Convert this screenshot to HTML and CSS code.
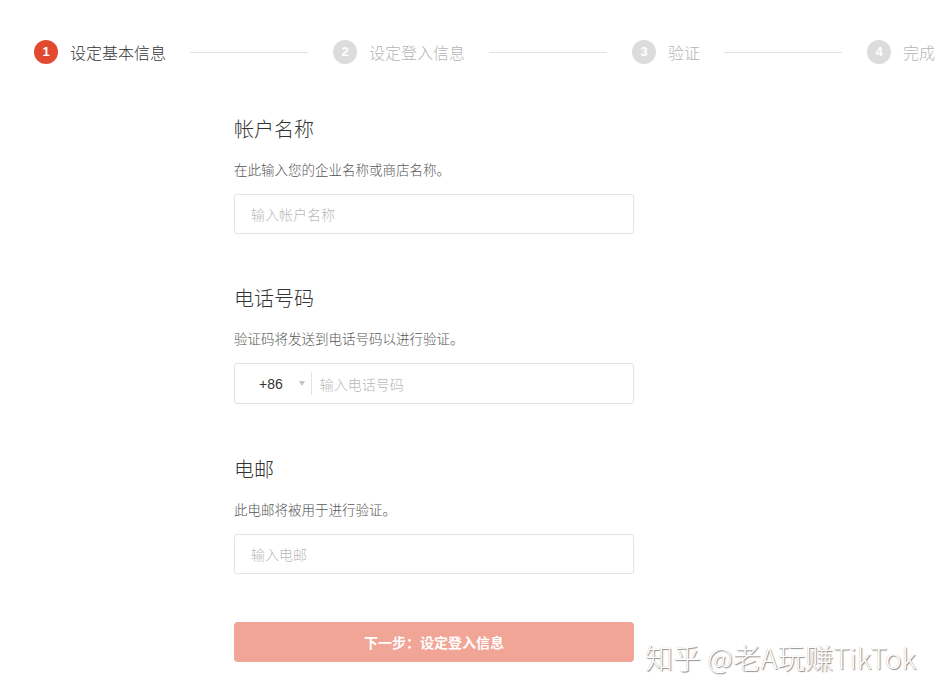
FILE: index.html
```html
<!DOCTYPE html>
<html lang="zh">
<head>
<meta charset="utf-8">
<link rel="stylesheet" href="styles.css">
</head>
<body>
<div class="page">
  <div class="steps">
    <span class="num active">1</span><span class="label active">设定基本信息</span><span class="line"></span>
    <span class="num">2</span><span class="label">设定登入信息</span><span class="line"></span>
    <span class="num">3</span><span class="label">验证</span><span class="line"></span>
    <span class="num">4</span><span class="label">完成</span>
  </div>

  <div class="form">
    <div class="section">
      <div class="title">帐户名称</div>
      <div class="desc">在此输入您的企业名称或商店名称。</div>
      <div class="input"><span class="ph">输入帐户名称</span></div>
    </div>
    <div class="section">
      <div class="title">电话号码</div>
      <div class="desc">验证码将发送到电话号码以进行验证。</div>
      <div class="input phone">
        <span class="code">+86</span>
        <span class="caret"></span>
        <span class="sep"></span>
        <span class="ph">输入电话号码</span>
      </div>
    </div>
    <div class="section">
      <div class="title">电邮</div>
      <div class="desc">此电邮将被用于进行验证。</div>
      <div class="input"><span class="ph">输入电邮</span></div>
    </div>
    <div class="btn">下一步：设定登入信息</div>
  </div>
  <div class="watermark">知乎 @老A玩赚TikTok</div>
</div>
</body>
</html>
```

FILE: styles.css
```css
* { box-sizing: border-box; }
html, body { margin: 0; padding: 0; background: #fff; }
body {
  font-family: "Noto Sans CJK SC", "Noto Sans", sans-serif;
  color: #333;
  width: 945px;
  height: 696px;
  overflow: hidden;
}
.page { position: relative; width: 945px; height: 696px; }

.steps {
  display: flex;
  align-items: center;
  padding: 40px 0 0 34px;
  height: 64px;
  white-space: nowrap;
}
.num {
  flex: none;
  width: 24px;
  height: 24px;
  border-radius: 50%;
  background: #dcdcdc;
  color: #fff;
  font-family: "Liberation Sans", sans-serif;
  font-weight: bold;
  font-size: 13px;
  line-height: 24px;
  text-align: center;
}
.num.active { background: #e24a30; }
.label {
  margin-left: 12px;
  font-size: 16px;
  line-height: 24px;
  font-weight: 300;
  color: #b5b5b5;
}
.label.active { color: #333; }
.line {
  flex: none;
  width: 118px;
  height: 1px;
  background: #e3e3e3;
  margin: 1px 25px 0 24px;
}

.form {
  margin: 51px 0 0 234px;
  width: 400px;
}
.section { margin-bottom: 50px; }
.section:nth-child(2) { margin-bottom: 51px; }
.section:nth-child(3) { margin-bottom: 48px; }
.title {
  font-size: 20px;
  line-height: 28px;
  font-weight: 300;
  color: #333;
}
.desc {
  margin-top: 16px;
  font-size: 13.5px;
  line-height: 20px;
  font-weight: 300;
  color: #555;
}
.input {
  margin-top: 15px;
  height: 40px;
  border: 1px solid #e3e3e3;
  border-radius: 3px;
  display: flex;
  align-items: center;
  padding-left: 16px;
  font-size: 14px;
}
.ph { color: #b8b8b8; font-weight: 300; }
.input.phone { height: 41px; padding-left: 24px; }
.code {
  font-family: "Liberation Sans", sans-serif;
  font-size: 14px;
  color: #333;
}
.caret {
  margin-left: 16px;
  width: 0;
  height: 0;
  border-left: 3.5px solid transparent;
  border-right: 3.5px solid transparent;
  border-top: 5px solid #c4c4c4;
}
.sep {
  margin-left: 6px;
  width: 1px;
  height: 23px;
  background: #e3e3e3;
}
.phone .ph { margin-left: 8px; }

.btn {
  height: 40px;
  border-radius: 4px;
  background: #f1a597;
  color: #fff;
  font-size: 14px;
  font-weight: bold;
  display: flex;
  align-items: center;
  justify-content: center;
}

.watermark {
  position: absolute;
  left: 645px;
  top: 637px;
  font-size: 28px;
  line-height: 40px;
  font-weight: 300;
  color: #fff;
  white-space: nowrap;
  text-shadow: 1px 1px 1px rgba(0,0,0,0.45), -0.5px -0.5px 0 rgba(0,0,0,0.2);
}
```
